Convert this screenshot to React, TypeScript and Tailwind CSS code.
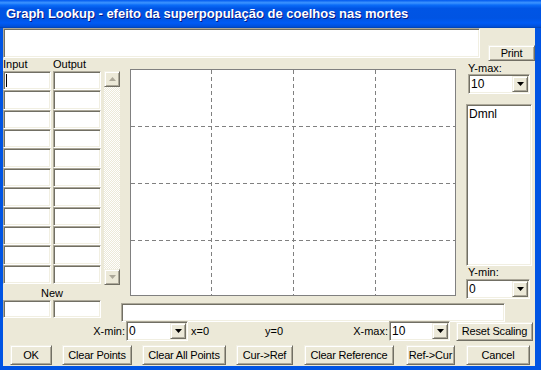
import React from "react";

const ui = { fontFamily: '"Liberation Sans", Arial, sans-serif' };

const sunken =
  "bg-white border border-t-[#aca899] border-l-[#aca899] border-r-white border-b-white shadow-[inset_1px_1px_0_#716f64,inset_-1px_-1px_0_#f1efe2]";
const raised =
  "bg-[#ece9d8] border border-t-[#f1efe2] border-l-[#f1efe2] border-r-[#716f64] border-b-[#716f64] shadow-[inset_1px_1px_0_#fff,inset_-1px_-1px_0_#aca899]";

function Btn({ label, w, h = 19, className = "" }: { label: string; w: number; h?: number; className?: string }) {
  return (
    <div
      className={`${raised} flex items-center justify-center text-[11px] text-black shrink-0 whitespace-nowrap tracking-[-0.2px] ${className}`}
      style={{ width: w, height: h }}
    >
      {label}
    </div>
  );
}

function Arrow({ dir, color }: { dir: "up" | "down"; color: string }) {
  return (
    <svg width="7" height="4" viewBox="0 0 7 4">
      <path d={dir === "down" ? "M0 0h7L3.5 4z" : "M0 4h7L3.5 0z"} fill={color} />
    </svg>
  );
}

function Combo({ value, w }: { value: string; w: number }) {
  return (
    <div className={`${sunken} flex items-center justify-between h-[20px] pl-[2px] pr-[1px] shrink-0`} style={{ width: w }}>
      <span className="text-[12px] leading-none">{value}</span>
      <div className={`${raised} w-[16px] h-[16px] flex items-center justify-center`}>
        <Arrow dir="down" color="#000" />
      </div>
    </div>
  );
}

const vLines = [80, 162, 244];
const hLines = [56, 113, 170];

function Graph() {
  return (
    <div className="w-[326px] h-[227px] mt-[11px] ml-[10px] bg-white border border-[#808080] shrink-0">
      <svg width="324" height="225" className="block">
        {vLines.map((x) => (
          <line key={"v" + x} x1={x + 0.5} y1={0} x2={x + 0.5} y2={225} stroke="#808080" strokeDasharray="4 3" />
        ))}
        {hLines.map((y) => (
          <line key={"h" + y} x1={0} y1={y + 0.5} x2={324} y2={y + 0.5} stroke="#808080" strokeDasharray="4 3" />
        ))}
      </svg>
    </div>
  );
}

export default function App() {
  const rows = Array.from({ length: 11 });
  return (
    <div className="w-[541px] h-[370px] flex flex-col bg-[#0054e3] overflow-hidden" style={ui}>
      {/* title bar */}
      <div className="h-[28px] shrink-0 flex items-center pl-[6px] bg-[linear-gradient(to_bottom,#0058ee_0%,#3d95ff_10%,#0a6cf8_18%,#0055e5_30%,#0054e3_65%,#005bf5_82%,#0050dc_94%,#0040b0_100%)]">
        <span className="text-white font-bold text-[13px] [text-shadow:1px_1px_0_#0a1883] pb-[1px]">
          Graph Lookup - efeito da superpopulação de coelhos nas mortes
        </span>
      </div>

      {/* client area */}
      <div className="flex-1 ml-[3px] mr-[6px] mb-[4px] bg-[#ece9d8] flex flex-col text-black text-[11px]">
        {/* top row */}
        <div className="h-[30px] flex items-start shrink-0">
          <div className={`${sunken} w-[477px] h-[30px]`} />
          <Btn label="Print" w={47} h={16} className="ml-[8px] mt-[17px]" />
        </div>

        {/* main */}
        <div className="flex shrink-0">
          {/* points table */}
          <div className="w-[98px] flex flex-col shrink-0">
            <div className="h-[13px] flex leading-[13px]">
              <span className="w-[50px]">Input</span>
              <span>Output</span>
            </div>
            <div className="grid grid-cols-[48px_48px] gap-x-[2px] grid-rows-[repeat(11,1fr)] h-[213px]">
              {rows.map((_, i) => (
                <React.Fragment key={i}>
                  <div className={`${sunken} flex items-center pl-[2px]`}>
                    {i === 0 && <div className="w-px h-[13px] bg-black" />}
                  </div>
                  <div className={sunken} />
                </React.Fragment>
              ))}
            </div>
            <div className="h-[16px] flex items-center justify-center leading-none pt-[2px]">New</div>
            <div className="flex gap-[2px]">
              <div className={`${sunken} w-[48px] h-[18px]`} />
              <div className={`${sunken} w-[48px] h-[18px]`} />
            </div>
          </div>

          <div className="flex flex-col">
            <div className="flex h-[242px]">
              {/* scrollbar */}
              <div className="ml-[3px] mt-[13px] w-[16px] h-[214px] flex flex-col shrink-0">
                <div className={`${raised} w-[16px] h-[16px] flex items-center justify-center`}>
                  <Arrow dir="up" color="#aca899" />
                </div>
                <div className="flex-1 bg-[repeating-conic-gradient(#fefefe_0_25%,#ece9d8_0_50%)] bg-[length:2px_2px]" />
                <div className={`${raised} w-[16px] h-[16px] flex items-center justify-center`}>
                  <Arrow dir="down" color="#aca899" />
                </div>
              </div>

              <Graph />

              {/* y axis panel */}
              <div className="ml-[10px] w-[66px] flex flex-col shrink-0">
                <div className="h-[12px] mt-[4px] pl-[2px] leading-[12px]">Y-max:</div>
                <div className="pl-[2px]">
                  <Combo value="10" w={62} />
                </div>
                <div className={`${sunken} mt-[10px] h-[162px] px-[2px] pt-[2px] text-[12px] leading-[14px]`}>Dmnl</div>
                <div className="h-[13px] pl-[2px] leading-[13px]">Y-min:</div>
                <Combo value="0" w={64} />
              </div>
            </div>
            <div className={`${sunken} ml-[20px] mt-[3px] w-[384px] h-[19px]`} />
          </div>
        </div>

        {/* x axis row */}
        <div className="flex items-center h-[20px] shrink-0 -mt-[1px] whitespace-nowrap">
          <span className="w-[123px] text-right pr-[1px]">X-min:</span>
          <Combo value="0" w={62} />
          <span className="ml-[3px] w-[74px]">x=0</span>
          <span className="w-[88px]">y=0</span>
          <span className="w-[36px] text-right pr-[1px]">X-max:</span>
          <Combo value="10" w={61} />
          <Btn label="Reset Scaling" w={77} className="ml-[6px]" />
        </div>

        {/* buttons */}
        <div className="flex items-center mt-[4px] pl-[7px]">
          <Btn label="OK" w={42} h={20} />
          <Btn label="Clear Points" w={70} h={20} className="ml-[10px]" />
          <Btn label="Clear All Points" w={84} h={20} className="ml-[10px]" />
          <Btn label="Cur->Ref" w={57} h={20} className="ml-[10px]" />
          <Btn label="Clear Reference" w={90} h={20} className="ml-[11px]" />
          <Btn label="Ref->Cur" w={49} h={20} className="ml-[12px]" />
          <Btn label="Cancel" w={64} h={20} className="ml-[11px]" />
        </div>
      </div>
    </div>
  );
}
